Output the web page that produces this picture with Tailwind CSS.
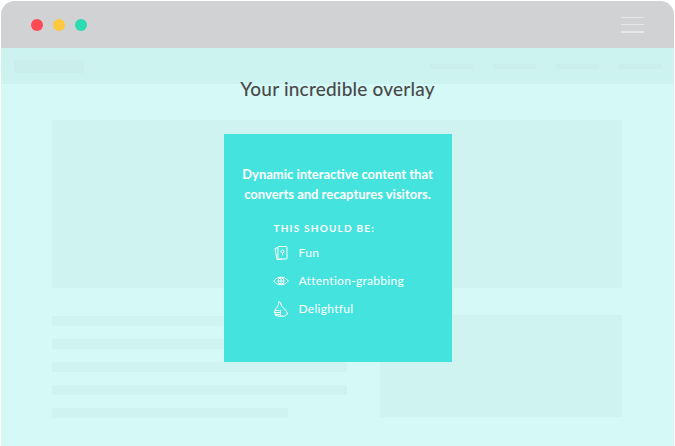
<!DOCTYPE html>
<html lang="en">

<head>
    <meta charset="UTF-8">
    <title>Your incredible overlay</title>
    <script src="https://cdn.jsdelivr.net/npm/@tailwindcss/browser@4"></script>
</head>

<body class="bg-white">
    <div class="relative w-[675px] h-[446px] overflow-hidden pl-px pt-px font-['Lato',sans-serif]">
        <!-- browser window -->
        <div class="w-[673px] h-[445px] rounded-t-[14px] overflow-hidden bg-[#d4f9f6]">
            <div class="h-[47px] bg-[#d1d2d4] flex items-center justify-between pl-[30px] pr-[30px]">
                <div class="flex gap-[10px]">
                    <span class="size-[12px] rounded-full bg-[#fd4a53]"></span>
                    <span class="size-[12px] rounded-full bg-[#fdc93f]"></span>
                    <span class="size-[12px] rounded-full bg-[#2bdcb1]"></span>
                </div>
                <div class="w-[23px] flex flex-col gap-[6px]">
                    <span class="h-px bg-[#e6e7e8]"></span>
                    <span class="h-px bg-[#e6e7e8]"></span>
                    <span class="h-[2px] bg-[#e6e7e8]"></span>
                </div>
            </div>
            <div class="h-[36px] bg-[#cdf3f0] flex items-center justify-between pl-[13px] pr-[12px]">
                <span class="w-[70px] h-[13px] bg-[#c9eeeb]"></span>
                <div class="flex gap-[20px]">
                    <span class="w-[43px] h-[5px] bg-[#c9eeeb]"></span>
                    <span class="w-[43px] h-[5px] bg-[#c9eeeb]"></span>
                    <span class="w-[43px] h-[5px] bg-[#c9eeeb]"></span>
                    <span class="w-[43px] h-[5px] bg-[#c9eeeb]"></span>
                </div>
            </div>
            <div class="pt-[36px] px-[51px]">
                <div class="h-[168px] w-[570px] bg-[#cff3f0]"></div>
                <div class="mt-[27px] flex gap-[33px] w-[570px]">
                    <div class="w-[295px] pt-px flex flex-col gap-[13.5px]">
                        <span class="h-[9.5px] bg-[#cff3f0]"></span>
                        <span class="h-[9.5px] bg-[#cff3f0]"></span>
                        <span class="h-[9.5px] bg-[#cff3f0]"></span>
                        <span class="h-[9.5px] bg-[#cff3f0]"></span>
                        <span class="h-[9.5px] w-[236px] bg-[#cff3f0]"></span>
                    </div>
                    <div class="w-[242px] h-[102px] bg-[#cff3f0]"></div>
                </div>
            </div>
        </div>

        <!-- overlay -->
        <div class="absolute left-0 top-[78px] w-[675px] flex flex-col items-center">
            <h1 class="text-[19px] leading-[22px] font-medium text-[#4a4a4a] tracking-[0.2px]">Your incredible overlay</h1>
            <div class="mt-[34px] w-[228px] h-[228px] bg-[#45e3de] text-white pt-[30px]">
                <p class="text-[13px] leading-[20px] font-bold text-center">Dynamic interactive content that<br>converts and recaptures visitors.</p>
                <p class="mt-[17px] ml-[50px] text-[10px] leading-[14px] font-bold tracking-[1.2px]">THIS SHOULD BE:</p>
                <ul class="mt-[8px] ml-[49px] flex flex-col gap-[8px] text-[12px] leading-[20px] tracking-[0.3px]">
                    <li class="flex items-center gap-[10px]">
                        <svg class="size-[16px]" viewBox="0 0 16 16" fill="none" stroke="#fff" stroke-width="1">
                            <rect x="5" y="1.5" width="9" height="12.5" rx="0.8" />
                            <path d="M5 2.5L2 3.5L4 14.5L9 14" />
                            <circle cx="9.5" cy="6.5" r="1.5" />
                            <path d="M9.5 8V10.5" />
                        </svg>
                        <span>Fun</span>
                    </li>
                    <li class="flex items-center gap-[10px]">
                        <svg class="size-[16px]" viewBox="0 0 16 16" fill="none" stroke="#fff" stroke-width="1">
                            <path d="M0.7 8C4.5 3 11.5 3 15.3 8C11.5 13 4.5 13 0.7 8Z" />
                            <circle cx="8" cy="8" r="3" />
                            <circle cx="8" cy="8" r="1.2" />
                        </svg>
                        <span>Attention-grabbing</span>
                    </li>
                    <li class="flex items-center gap-[10px]">
                        <svg class="size-[16px]" viewBox="0 0 16 16" fill="none" stroke="#fff" stroke-width="1">
                            <path d="M5.5 0.8C6 3 5 4.5 4 6.5L2.5 8L1.5 11L2.5 14.5L6 15.2H11.5L14.5 13L13 9.5L8.5 5L7.5 1.5Z" />
                            <path d="M2 9.5H6.5M2 11.5H7M3 13.5H7.5M7.5 9V15" />
                        </svg>
                        <span>Delightful</span>
                    </li>
                </ul>
            </div>
        </div>
    </div>
</body>

</html>
